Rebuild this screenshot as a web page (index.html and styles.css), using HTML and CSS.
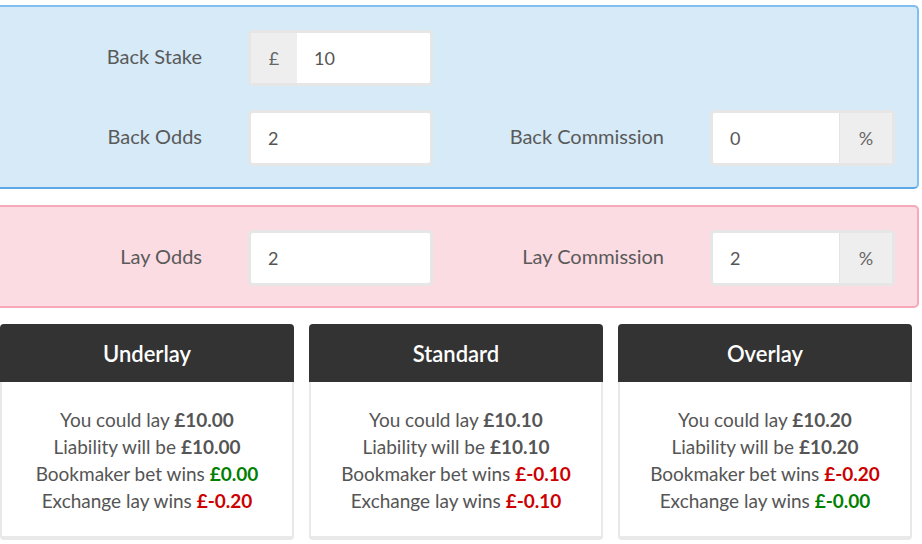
FILE: index.html
```html
<!DOCTYPE html>
<html>
<head>
<meta charset="utf-8">
<link rel="stylesheet" href="styles.css">
</head>
<body>
<div class="page">
  <section class="panel panel-back">
    <div class="form-grid">
      <label class="lbl">Back Stake</label>
      <div class="group"><span class="addon addon-left">£</span><span class="field">10</span></div>
      <span class="empty"></span>
      <span class="empty"></span>

      <label class="lbl">Back Odds</label>
      <div class="group"><span class="field">2</span></div>
      <label class="lbl">Back Commission</label>
      <div class="group"><span class="field">0</span><span class="addon addon-right">%</span></div>
    </div>
  </section>

  <section class="panel panel-lay">
    <div class="form-grid">
      <label class="lbl">Lay Odds</label>
      <div class="group"><span class="field">2</span></div>
      <label class="lbl">Lay Commission</label>
      <div class="group"><span class="field">2</span><span class="addon addon-right">%</span></div>
    </div>
  </section>

  <div class="cards">
    <div class="card">
      <div class="card-head">Underlay</div>
      <div class="card-body">
        <p>You could lay <b>£10.00</b></p>
        <p>Liability will be <b>£10.00</b></p>
        <p>Bookmaker bet wins <b class="pos">£0.00</b></p>
        <p>Exchange lay wins <b class="neg">£-0.20</b></p>
      </div>
    </div>
    <div class="card">
      <div class="card-head">Standard</div>
      <div class="card-body">
        <p>You could lay <b>£10.10</b></p>
        <p>Liability will be <b>£10.10</b></p>
        <p>Bookmaker bet wins <b class="neg">£-0.10</b></p>
        <p>Exchange lay wins <b class="neg">£-0.10</b></p>
      </div>
    </div>
    <div class="card">
      <div class="card-head">Overlay</div>
      <div class="card-body">
        <p>You could lay <b>£10.20</b></p>
        <p>Liability will be <b>£10.20</b></p>
        <p>Bookmaker bet wins <b class="neg">£-0.20</b></p>
        <p>Exchange lay wins <b class="pos">£-0.00</b></p>
      </div>
    </div>
  </div>
</div>
</body>
</html>
```

FILE: styles.css
```css
* { box-sizing: border-box; }
html, body { margin: 0; padding: 0; background: #fff; }
body {
  font-family: "Lato", "Source Sans Pro", "Noto Sans", sans-serif;
  color: #555;
  font-size: 19px;
}
.page {
  width: 922px;
  padding-top: 5px;
}
.panel {
  width: 919px;
  border: 2px solid #7dbcee;
  border-left: none;
  border-radius: 0 5px 5px 0;
}
.panel-back {
  background: #d6eaf8;
  border-color: #80bff0;
  border-bottom-color: #5aa9e6;
  padding: 23px 0 21px;
}
.panel-lay {
  margin-top: 16px;
  background: #fcdce3;
  border-color: #f8a9b9;
  padding: 23px 0 20px;
}
.form-grid {
  display: grid;
  grid-template-columns: 202px 185px 185px 185px;
  column-gap: 46px;
  row-gap: 24px;
  align-items: center;
}
.lbl {
  text-align: right;
  font-size: 20px;
  line-height: 24px;
  padding-bottom: 4px;
  color: #5a5a5a;
}
.group {
  display: flex;
  height: 56px;
  border: 3px solid #e6e6e6;
  border-radius: 5px;
  background: #fff;
  overflow: hidden;
}
.field {
  flex: 1;
  display: flex;
  align-items: center;
  padding-left: 17px;
  font-size: 18px;
  color: #555;
  background: #fff;
}
.addon {
  display: flex;
  align-items: center;
  justify-content: center;
  background: #eeeeee;
  color: #666;
  font-size: 18px;
}
.addon-left { width: 46px; }
.addon-right { width: 53px; border-left: 1px solid #e4e4e4; }
.cards {
  margin-top: 16px;
  display: grid;
  grid-template-columns: repeat(3, 294px);
  column-gap: 15px;
}
.card {
  border-radius: 4px;
  background: #fff;
}
.card-head {
  height: 58px;
  background: #333;
  color: #fff;
  border-radius: 4px 4px 0 0;
  display: flex;
  align-items: center;
  justify-content: center;
  font-size: 22px;
  font-weight: 600;
}
.card-body {
  border: 2px solid #e9e9e9;
  border-top: none;
  border-bottom-width: 4px;
  border-radius: 0 0 4px 4px;
  padding: 24px 0 22px;
  text-align: center;
}
.card-body p {
  margin: 0;
  line-height: 27px;
  font-size: 19px;
}
.card-body b { font-weight: 700; color: #555; }
.card-body b.pos { color: #008000; }
.card-body b.neg { color: #cc0000; }
```
